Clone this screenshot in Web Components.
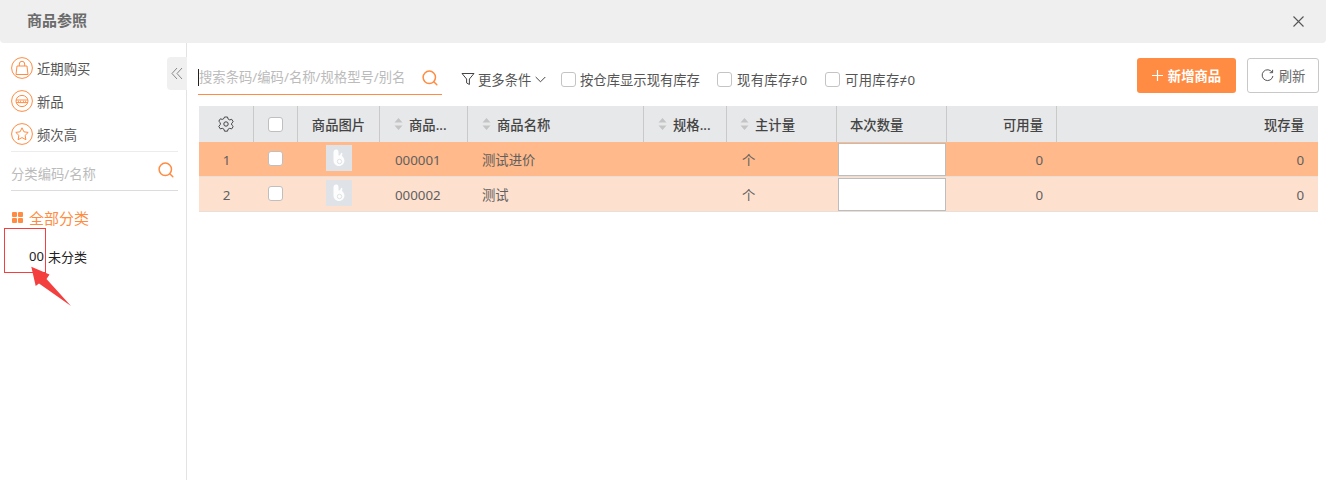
<!DOCTYPE html>
<html lang="zh">
<head>
<meta charset="utf-8">
<title>商品参照</title>
<style>
  html, body { margin: 0; height: 100%; background: #fff; overflow: hidden; }
  body { font-family: "Noto Sans", "Noto Sans CJK SC", sans-serif; font-size: 13.33px; color: #555; }
</style>
</head>
<body>
<goods-dialog></goods-dialog>
<script>
const ORANGE = "#ff8c42";
const SEARCH_ICON = `<svg width="16" height="16" viewBox="0 0 16 16" fill="none" stroke="${ORANGE}" stroke-width="1.5" stroke-linecap="round"><circle cx="7.3" cy="7.3" r="6.2"/><path d="M11.8 11.8l3 3"/></svg>`;

class DialogHeader extends HTMLElement {
  constructor() {
    super();
    this.attachShadow({ mode: "open" });
    this.shadowRoot.innerHTML = `
      <style>
        :host { display: flex; align-items: center; justify-content: space-between; height: 43px; box-sizing: border-box; padding: 0 22px 1px 27px; background: #efefef; border-radius: 0 0 4px 4px; }
        span { font-size: 15px; font-weight: 700; color: #6b6b6b; line-height: 20px; margin-top: -3px; }
        svg { display: block; }
      </style>
      <span><slot></slot></span>
      <svg width="11" height="11" viewBox="0 0 11 11" stroke="#555" stroke-width="1.1" fill="none"><path d="M.5.5l10 10M10.5.5l-10 10"/></svg>`;
  }
}
customElements.define("dialog-header", DialogHeader);

class QuickLink extends HTMLElement {
  constructor() {
    super();
    this.attachShadow({ mode: "open" });
  }
  connectedCallback() {
    const icons = {
      bag: `<path d="M6 9h10l1 8.500H5z" stroke-linejoin="round"/><path d="M8.300 9V7a2.700 2.700 0 0 1 5.400 0v2"/>`,
      fresh: `<ellipse cx="11" cy="11" rx="6" ry="5.600"/><path d="M5.200 10h11.600M5.200 12.600h11.600"/><path d="M7 11.300h1M9 11.300h1M12 11.300h1M14 11.300h1"/>`,
      star: `<path d="M11 4.800l1.900 4 4.300.6-3.100 3 .8 4.300-3.900-2.100-3.900 2.100.8-4.300-3.100-3 4.300-.6z" stroke-linejoin="round"/>`,
    };
    this.shadowRoot.innerHTML = `
      <style>
        :host { display: flex; align-items: center; height: 32px; margin-bottom: 1px; gap: 4px; color: #555; }
        svg { flex: none; display: block; }
      </style>
      <svg width="22" height="22" viewBox="0 0 22 22" fill="none" stroke="${ORANGE}" stroke-width="1"><circle cx="11" cy="11" r="10.400"/>${icons[this.getAttribute("icon")]}</svg>
      <slot></slot>`;
  }
}
customElements.define("quick-link", QuickLink);

class CategoryPanel extends HTMLElement {
  constructor() {
    super();
    this.attachShadow({ mode: "open" });
    this.shadowRoot.innerHTML = `
      <style>
        :host { display: block; position: relative; width: 187px; flex: none; box-sizing: border-box; border-right: 1px solid #e3e3e3; padding: 9px 8px 0 11px; }
        .links { height: 99px; border-bottom: 1px solid #ececec; }
        .search { display: flex; align-items: center; justify-content: space-between; height: 39px; box-sizing: border-box; padding: 5px 4px 0 0; border-bottom: 1px solid #dcdcdc; color: #bbb; }
        .search svg { margin-top: -8px; }
        .all { display: flex; align-items: center; gap: 6px; margin-top: 14px; height: 24px; color: ${ORANGE}; font-size: 15px; margin-left: 1px; }
        .grid { display: grid; grid-template-columns: 5px 5px; gap: 1px; margin-top: 1px; }
        .grid i { height: 5px; background: ${ORANGE}; border-radius: 1px; }
        .tree { display: flex; gap: 4px; margin: 17px 0 0 18px; height: 20px; align-items: center; color: #222; font-size: 13px; }
        .collapse { position: absolute; left: 167px; top: 14px; width: 20px; height: 33px; background: #f0f0f0; border-radius: 4px 0 0 4px; display: flex; align-items: center; justify-content: center; }
        .mark { position: absolute; left: 4px; top: 185px; width: 42px; height: 45px; box-sizing: border-box; border: 1px solid #f33f3f; }
        .arrow { position: absolute; left: 28px; top: 221px; }
      </style>
      <div class="links">
        <quick-link icon="bag">近期购买</quick-link>
        <quick-link icon="fresh">新品</quick-link>
        <quick-link icon="star">频次高</quick-link>
      </div>
      <div class="search"><span>分类编码/名称</span>${SEARCH_ICON}</div>
      <div class="all"><span class="grid"><i></i><i></i><i></i><i></i></span><span>全部分类</span></div>
      <div class="tree"><span>00</span><span>未分类</span></div>
      <div class="collapse"><svg width="12" height="13" viewBox="0 0 12 13" fill="none" stroke="#888" stroke-width="1"><path d="M6 1L1 6.500 6 12M11 1L6 6.500 11 12"/></svg></div>
      <div class="mark"></div>
      <svg class="arrow" width="46" height="44" viewBox="0 0 46 44"><path d="M3.300 2.700L21.500 10.500 18.500 15 43 42 11 19.500 7.700 22z" fill="#f43f3f"/></svg>`;
  }
}
customElements.define("category-panel", CategoryPanel);

class TickBox extends HTMLElement {
  constructor() {
    super();
    this.attachShadow({ mode: "open" });
    this.shadowRoot.innerHTML = `
      <style>
        :host { display: inline-flex; align-items: center; gap: 5px; color: #555; white-space: nowrap; }
        i { display: block; width: 15px; height: 15px; box-sizing: border-box; background: #fff; border: 1px solid #c4c4c4; border-radius: 3px; flex: none; }
      </style>
      <i></i><slot></slot>`;
  }
}
customElements.define("tick-box", TickBox);

class GoodsToolbar extends HTMLElement {
  constructor() {
    super();
    this.attachShadow({ mode: "open" });
    this.shadowRoot.innerHTML = `
      <style>
        :host { display: flex; align-items: center; height: 37px; margin: 0 -1px 0 -1px; }
        .search { display: flex; align-items: center; justify-content: space-between; width: 244px; height: 37px; box-sizing: border-box; border-bottom: 1px solid ${ORANGE}; padding: 3px 4px 0 0; color: #bbb; margin-right: 19px; }
        .search span { display: block; border-left: 1px solid #222; line-height: 17px; height: 17px; white-space: nowrap; }
        .more { display: flex; align-items: center; gap: 3px; color: #555; width: 100px; margin-top: 5px; }
        .more svg:last-child { margin-left: 1px; }
        tick-box { margin-top: 5px; }
        .t1 { width: 156px; gap: 4px; }
        .t2 { width: 108px; }
        .spacer { flex: 1; }
        .add, .refresh { display: flex; align-items: center; justify-content: center; height: 35px; box-sizing: border-box; border-radius: 3px; margin-top: -3px; }
        .add { width: 99px; background: ${ORANGE}; color: #fff; gap: 5px; font-weight: 700; }
        .refresh { width: 72px; margin-left: 11px; background: #fff; border: 1px solid #c8c8c8; color: #666; gap: 5px; }
        .ne { letter-spacing: .3px; }
      </style>
      <div class="search"><span>搜索条码/编码/名称/规格型号/别名</span>${SEARCH_ICON}</div>
      <div class="more">
        <svg width="14" height="14" viewBox="0 0 14 14" fill="none" stroke="#444" stroke-width="1" stroke-linejoin="round"><path d="M1 1.500h12L8.400 7v5.500l-2.800-1.600V7z"/></svg>
        <span>更多条件</span>
        <svg width="11" height="7" viewBox="0 0 11 7" fill="none" stroke="#444" stroke-width="1"><path d="M.7 1l4.800 4.800L10.300 1"/></svg>
      </div>
      <tick-box class="t1">按仓库显示现有库存</tick-box>
      <tick-box class="t2"><span class="ne">现有库存≠0</span></tick-box>
      <tick-box><span class="ne">可用库存≠0</span></tick-box>
      <div class="spacer"></div>
      <div class="add"><svg width="11" height="11" viewBox="0 0 11 11" stroke="#fff" stroke-width="1.200"><path d="M5.500 0v11M0 5.500h11"/></svg><span>新增商品</span></div>
      <div class="refresh"><svg width="13" height="13" viewBox="0 0 13 13" fill="none" stroke="#555" stroke-width="1"><path d="M11.200 3.400A5.400 5.400 0 1 0 11.900 7"/><path d="M11.600 .8v2.900H8.700"/></svg><span>刷新</span></div>`;
  }
}
customElements.define("goods-toolbar", GoodsToolbar);

class HeadCell extends HTMLElement {
  constructor() {
    super();
    this.attachShadow({ mode: "open" });
  }
  connectedCallback() {
    const sort = this.hasAttribute("sort") ? `<svg width="9" height="14" viewBox="0 0 9 14" fill="#c4c4c4"><path d="M4.500 1L8.500 5.500H.5zM4.500 13L.5 8.500h8z"/></svg>` : "";
    const align = this.getAttribute("align") || "left";
    const just = { left: "flex-start", center: "center", right: "flex-end" }[align];
    const pad = this.getAttribute("pad") || "0 13px 0 14px";
    this.shadowRoot.innerHTML = `
      <style>
        :host { display: flex; align-items: center; justify-content: ${just}; gap: 6px; padding: ${pad}; box-sizing: border-box; height: 36px; min-width: 0; background: #e7e8ea; border-right: 1px solid #c9c9c9; color: #444; font-weight: 500; white-space: nowrap; overflow: hidden; }
        :host([last]) { border-right: 0; }
        svg { flex: none; display: block; }
      </style>
      ${sort}<slot></slot>`;
  }
}
customElements.define("head-cell", HeadCell);

class ThumbImage extends HTMLElement {
  constructor() {
    super();
    this.attachShadow({ mode: "open" });
    this.shadowRoot.innerHTML = `
      <style>
        :host { display: block; width: 26px; height: 26px; background: #dfe3e7; }
        svg { display: block; }
      </style>
      <svg width="26" height="26" viewBox="0 0 26 26"><path d="M10.500 4.500c1.300 0 2 1.200 2 3v3l1.500-.2c.4-1.300 1-2.600 1.800-2.600.8 0 .8 1.500 0 3.200 1.600 1 2.600 2.700 2.600 4.600 0 3.100-2.400 5.500-5.400 5.500s-5.500-2.400-5.500-5.500V7.500c0-1.800 1.100-3 2.500-3z" fill="#fff" fill-opacity=".92"/><circle cx="13.500" cy="16.500" r="2.200" fill="none" stroke="#dfe3e7" stroke-width="1"/></svg>`;
  }
}
customElements.define("thumb-image", ThumbImage);

class GoodsRow extends HTMLElement {
  constructor() {
    super();
    this.attachShadow({ mode: "open" });
  }
  connectedCallback() {
    const d = this.dataset;
    this.shadowRoot.innerHTML = `
      <style>
        :host { display: grid; grid-template-columns: var(--cols); height: 35px; box-sizing: border-box; background: ${d.bg}; border-bottom: 1px solid #e8dfd8; color: #606060; }
        div { display: flex; align-items: center; padding-top: 1px; box-sizing: border-box; min-width: 0; }
        .c { justify-content: center; }
        .r { justify-content: flex-end; padding-right: 14px; }
        .l { padding-left: 15px; }
        .name { padding-left: 14px; }
        .box { display: block; width: 15px; height: 15px; box-sizing: border-box; background: #fff; border: 1px solid #bfbfbf; border-radius: 3px; margin-left: -1px; }
        .tick { align-items: flex-start; padding-top: 9px; }
        .thumb { align-items: flex-start; padding-top: 3px; }
        input { display: block; width: 108px; height: 33px; margin: 0; padding: 0; box-sizing: border-box; background: #fff; border: 1px solid #bdbdbd; border-radius: 0; outline: 0; }
        .qty { align-items: flex-start; padding: 1px 0 0 1px; }
      </style>
      <div class="c">${d.no}</div>
      <div class="c tick"><span class="box"></span></div>
      <div class="c thumb"><thumb-image></thumb-image></div>
      <div class="l">${d.code}</div>
      <div class="name">${d.name}</div>
      <div></div>
      <div class="l">个</div>
      <div class="qty"><input type="text"></div>
      <div class="r">0</div>
      <div class="r">0</div>`;
  }
}
customElements.define("goods-row", GoodsRow);

class GoodsTable extends HTMLElement {
  constructor() {
    super();
    this.attachShadow({ mode: "open" });
    this.shadowRoot.innerHTML = `
      <style>
        :host { display: block; --cols: 55px 44px 82px 88px 176px 83px 110px 110px 110px 1fr; margin-top: 11px; }
        .head { display: grid; grid-template-columns: var(--cols); }
        .box { display: block; width: 15px; height: 15px; box-sizing: border-box; background: #fff; border: 1px solid #bfbfbf; border-radius: 3px; }
        .more { overflow: hidden; text-overflow: ellipsis; }
      </style>
      <div class="head">
        <head-cell align="center" pad="0"><svg width="16" height="16" viewBox="0 0 16 16" fill="none" stroke="#444" stroke-width="1" stroke-linejoin="round"><path d="M6.500 1.500h3l.5 2 1.700 1 2-.6 1.500 2.600-1.500 1.500v1.900l1.500 1.500-1.500 2.600-2-.6-1.700 1-.5 2h-3l-.5-2-1.700-1-2 .6-1.500-2.600L2.300 9.400V7.500L.8 6l1.500-2.600 2 .6 1.700-1z" transform="translate(0 -.4) scale(1 .95)"/><circle cx="8" cy="8" r="2.200"/></svg></head-cell>
        <head-cell align="center" pad="0"><span class="box"></span></head-cell>
        <head-cell align="center" pad="0">商品图片</head-cell>
        <head-cell sort><span class="more">商品...</span></head-cell>
        <head-cell sort>商品名称</head-cell>
        <head-cell sort><span class="more">规格...</span></head-cell>
        <head-cell sort pad="0 13px">主计量</head-cell>
        <head-cell pad="0 13px">本次数量</head-cell>
        <head-cell align="right">可用量</head-cell>
        <head-cell align="right" pad="0 14px 0 0" last>现存量</head-cell>
      </div>
      <goods-row data-no="1" data-code="000001" data-name="测试进价" data-bg="#ffb98a"></goods-row>
      <goods-row data-no="2" data-code="000002" data-name="测试" data-bg="#fee0cf"></goods-row>`;
  }
}
customElements.define("goods-table", GoodsTable);

class GoodsDialog extends HTMLElement {
  constructor() {
    super();
    this.attachShadow({ mode: "open" });
    this.shadowRoot.innerHTML = `
      <style>
        :host { display: flex; flex-direction: column; height: 480px; }
        .body { display: flex; flex: 1; min-height: 0; }
        main { flex: 1; min-width: 0; padding: 15px 8px 0 12px; }
      </style>
      <dialog-header>商品参照</dialog-header>
      <div class="body">
        <category-panel></category-panel>
        <main>
          <goods-toolbar></goods-toolbar>
          <goods-table></goods-table>
        </main>
      </div>`;
  }
}
customElements.define("goods-dialog", GoodsDialog);
</script>
</body>
</html>
